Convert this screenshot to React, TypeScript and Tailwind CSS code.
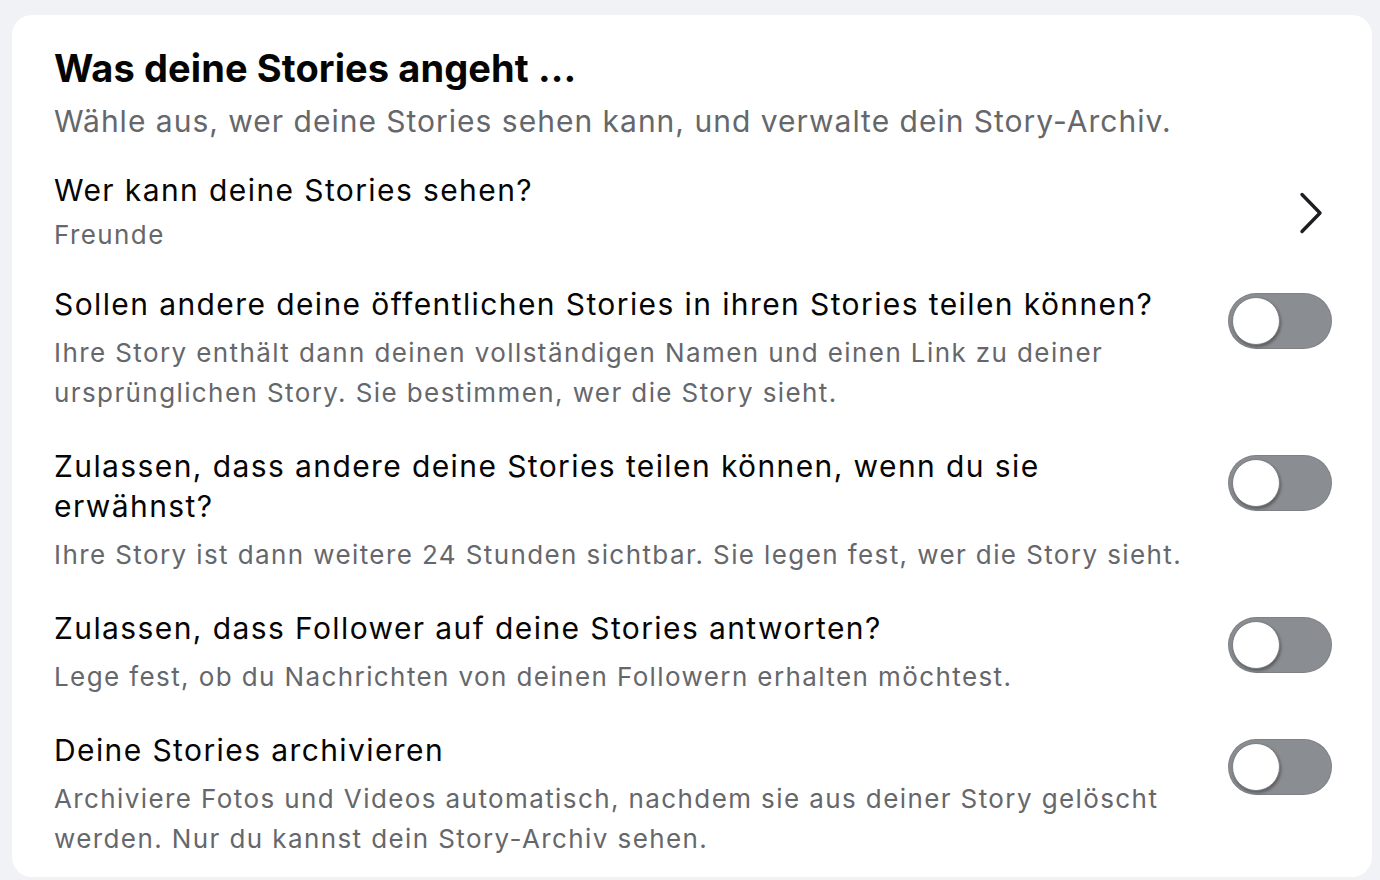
const font = { fontFamily: "Inter, 'Noto Sans', sans-serif" };

type Row = { title: string; desc: string };

const rows: Row[] = [
  {
    title: "Sollen andere deine öffentlichen Stories in ihren Stories teilen können?",
    desc: "Ihre Story enthält dann deinen vollständigen Namen und einen Link zu deiner ursprünglichen Story. Sie bestimmen, wer die Story sieht.",
  },
  {
    title: "Zulassen, dass andere deine Stories teilen können, wenn du sie erwähnst?",
    desc: "Ihre Story ist dann weitere 24 Stunden sichtbar. Sie legen fest, wer die Story sieht.",
  },
  {
    title: "Zulassen, dass Follower auf deine Stories antworten?",
    desc: "Lege fest, ob du Nachrichten von deinen Followern erhalten möchtest.",
  },
  {
    title: "Deine Stories archivieren",
    desc: "Archiviere Fotos und Videos automatisch, nachdem sie aus deiner Story gelöscht werden. Nur du kannst dein Story-Archiv sehen.",
  },
];

function Toggle() {
  return (
    <div className="relative h-[56px] w-[104px] shrink-0 rounded-full bg-[#8a8d91] shadow-[inset_0_0_0_1px_rgba(0,0,0,0.08)]">
      <div className="absolute left-[4px] top-[4px] h-[48px] w-[48px] rounded-full border border-[#7b7e82] bg-white shadow-[1px_2px_3px_rgba(0,0,0,0.35)]" />
    </div>
  );
}

export default function App() {
  return (
    <div className="min-h-screen bg-[#f0f2f5] pl-3 pr-2 pt-[15px]" style={font}>
      <div className="rounded-[20px] bg-white pb-[18px] pl-[42px] pr-[40px] pt-[31px]">
        <h2 className="text-[38px] font-bold leading-[44px] tracking-[0.1px] text-[#050505]">
          Was deine Stories angeht ...
        </h2>
        <p className="mt-[13px] text-[30px] leading-[36px] tracking-[1px] text-[#65676b]">
          Wähle aus, wer deine Stories sehen kann, und verwalte dein Story-Archiv.
        </p>

        <div className="mt-[31px] flex items-center">
          <div className="flex-1">
            <div className="text-[30px] leading-[40px] tracking-[1.4px] text-[#050505]">Wer kann deine Stories sehen?</div>
            <div className="mt-[5px] text-[26px] leading-[40px] tracking-[1.4px] text-[#65676b]">Freunde</div>
          </div>
          <svg width="26" height="44" viewBox="0 0 26 44" className="mr-[8px]" fill="none">
            <path d="M4 3.5 L22 22 L4 40.5" stroke="#1c1e21" strokeWidth="3.4" strokeLinecap="round" strokeLinejoin="round" />
          </svg>
        </div>

        <div className="mt-[29px] flex flex-col gap-[33px]">
          {rows.map((r) => (
            <div key={r.title} className="flex items-start gap-[34px]">
              <div className="flex-1">
                <div className="text-[30px] leading-[40px] tracking-[1.4px] text-[#050505]">{r.title}</div>
                <div className="mt-[9px] text-[26px] leading-[40px] tracking-[1.4px] text-[#65676b]">{r.desc}</div>
              </div>
              <div className="mt-[9px]">
                <Toggle />
              </div>
            </div>
          ))}
        </div>
      </div>
    </div>
  );
}
